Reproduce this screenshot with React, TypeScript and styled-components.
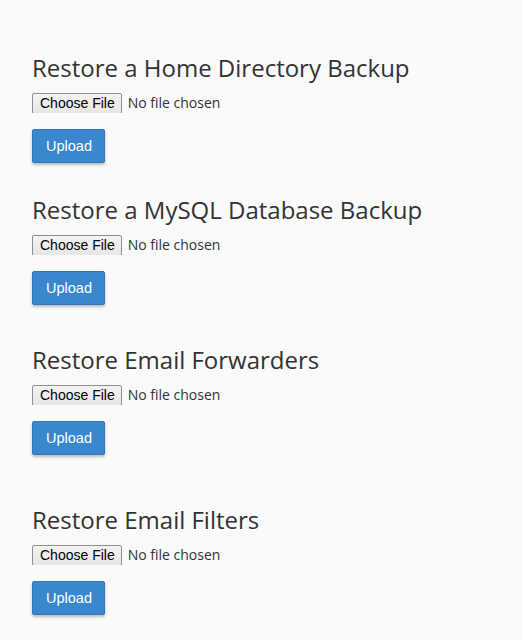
import React from "react";
import styled, { createGlobalStyle } from "styled-components";

const GlobalStyle = createGlobalStyle`
    body {
        margin: 0;
        background: #fafafa;
        font-family: "Open Sans", "Liberation Sans", sans-serif;
        color: #333;
    }
`;

const Page = styled.div`
    padding: 55px 32px 20px;
    min-height: 640px;
    box-sizing: border-box;
`;

const Section = styled.section<{ $space: number }>`
    display: flex;
    flex-direction: column;
    align-items: flex-start;
    margin-top: ${(props) => props.$space}px;
`;

const Title = styled.h2`
    margin: 0;
    font-size: 24px;
    font-weight: 400;
    line-height: 26px;
    color: #333;
`;

const FileField = styled.input`
    display: block;
    height: 21px;
    margin: 11px 0 0;
    padding: 0;
    font-family: "Open Sans", "Liberation Sans", sans-serif;
    font-size: 14px;
    color: #333;
    line-height: 21px;

    &::file-selector-button {
        font-family: "Liberation Sans", Arial, sans-serif;
        font-size: 14px;
        color: #000;
        height: 21px;
        padding: 0 6px 0 7px;
        margin-right: 6px;
        border: 1px solid #8f8f8f;
        border-radius: 2px;
        background: linear-gradient(#f4f4f4, #e6e6e6);
    }
`;

const UploadButton = styled.button`
    margin-top: 16px;
    height: 34px;
    padding: 0 12px 0 13px;
    font-family: "Liberation Sans", Arial, sans-serif;
    font-size: 14.5px;
    color: #fff;
    background: #3a87cd;
    border: 1px solid #2f77ba;
    border-radius: 2px;
    box-shadow: 0 2px 3px rgba(0, 0, 0, 0.25);
    cursor: pointer;
`;

const sections = [
    { title: "Restore a Home Directory Backup", space: 0 },
    { title: "Restore a MySQL Database Backup", space: 34 },
    { title: "Restore Email Forwarders", space: 42 },
    { title: "Restore Email Filters", space: 52 },
];

const App: React.FC = () => {
    return (
        <>
            <GlobalStyle />
            <Page>
                {sections.map((s) => (
                    <Section key={s.title} $space={s.space}>
                        <Title>{s.title}</Title>
                        <FileField type="file" />
                        <UploadButton type="button">Upload</UploadButton>
                    </Section>
                ))}
            </Page>
        </>
    );
};

export default App;
